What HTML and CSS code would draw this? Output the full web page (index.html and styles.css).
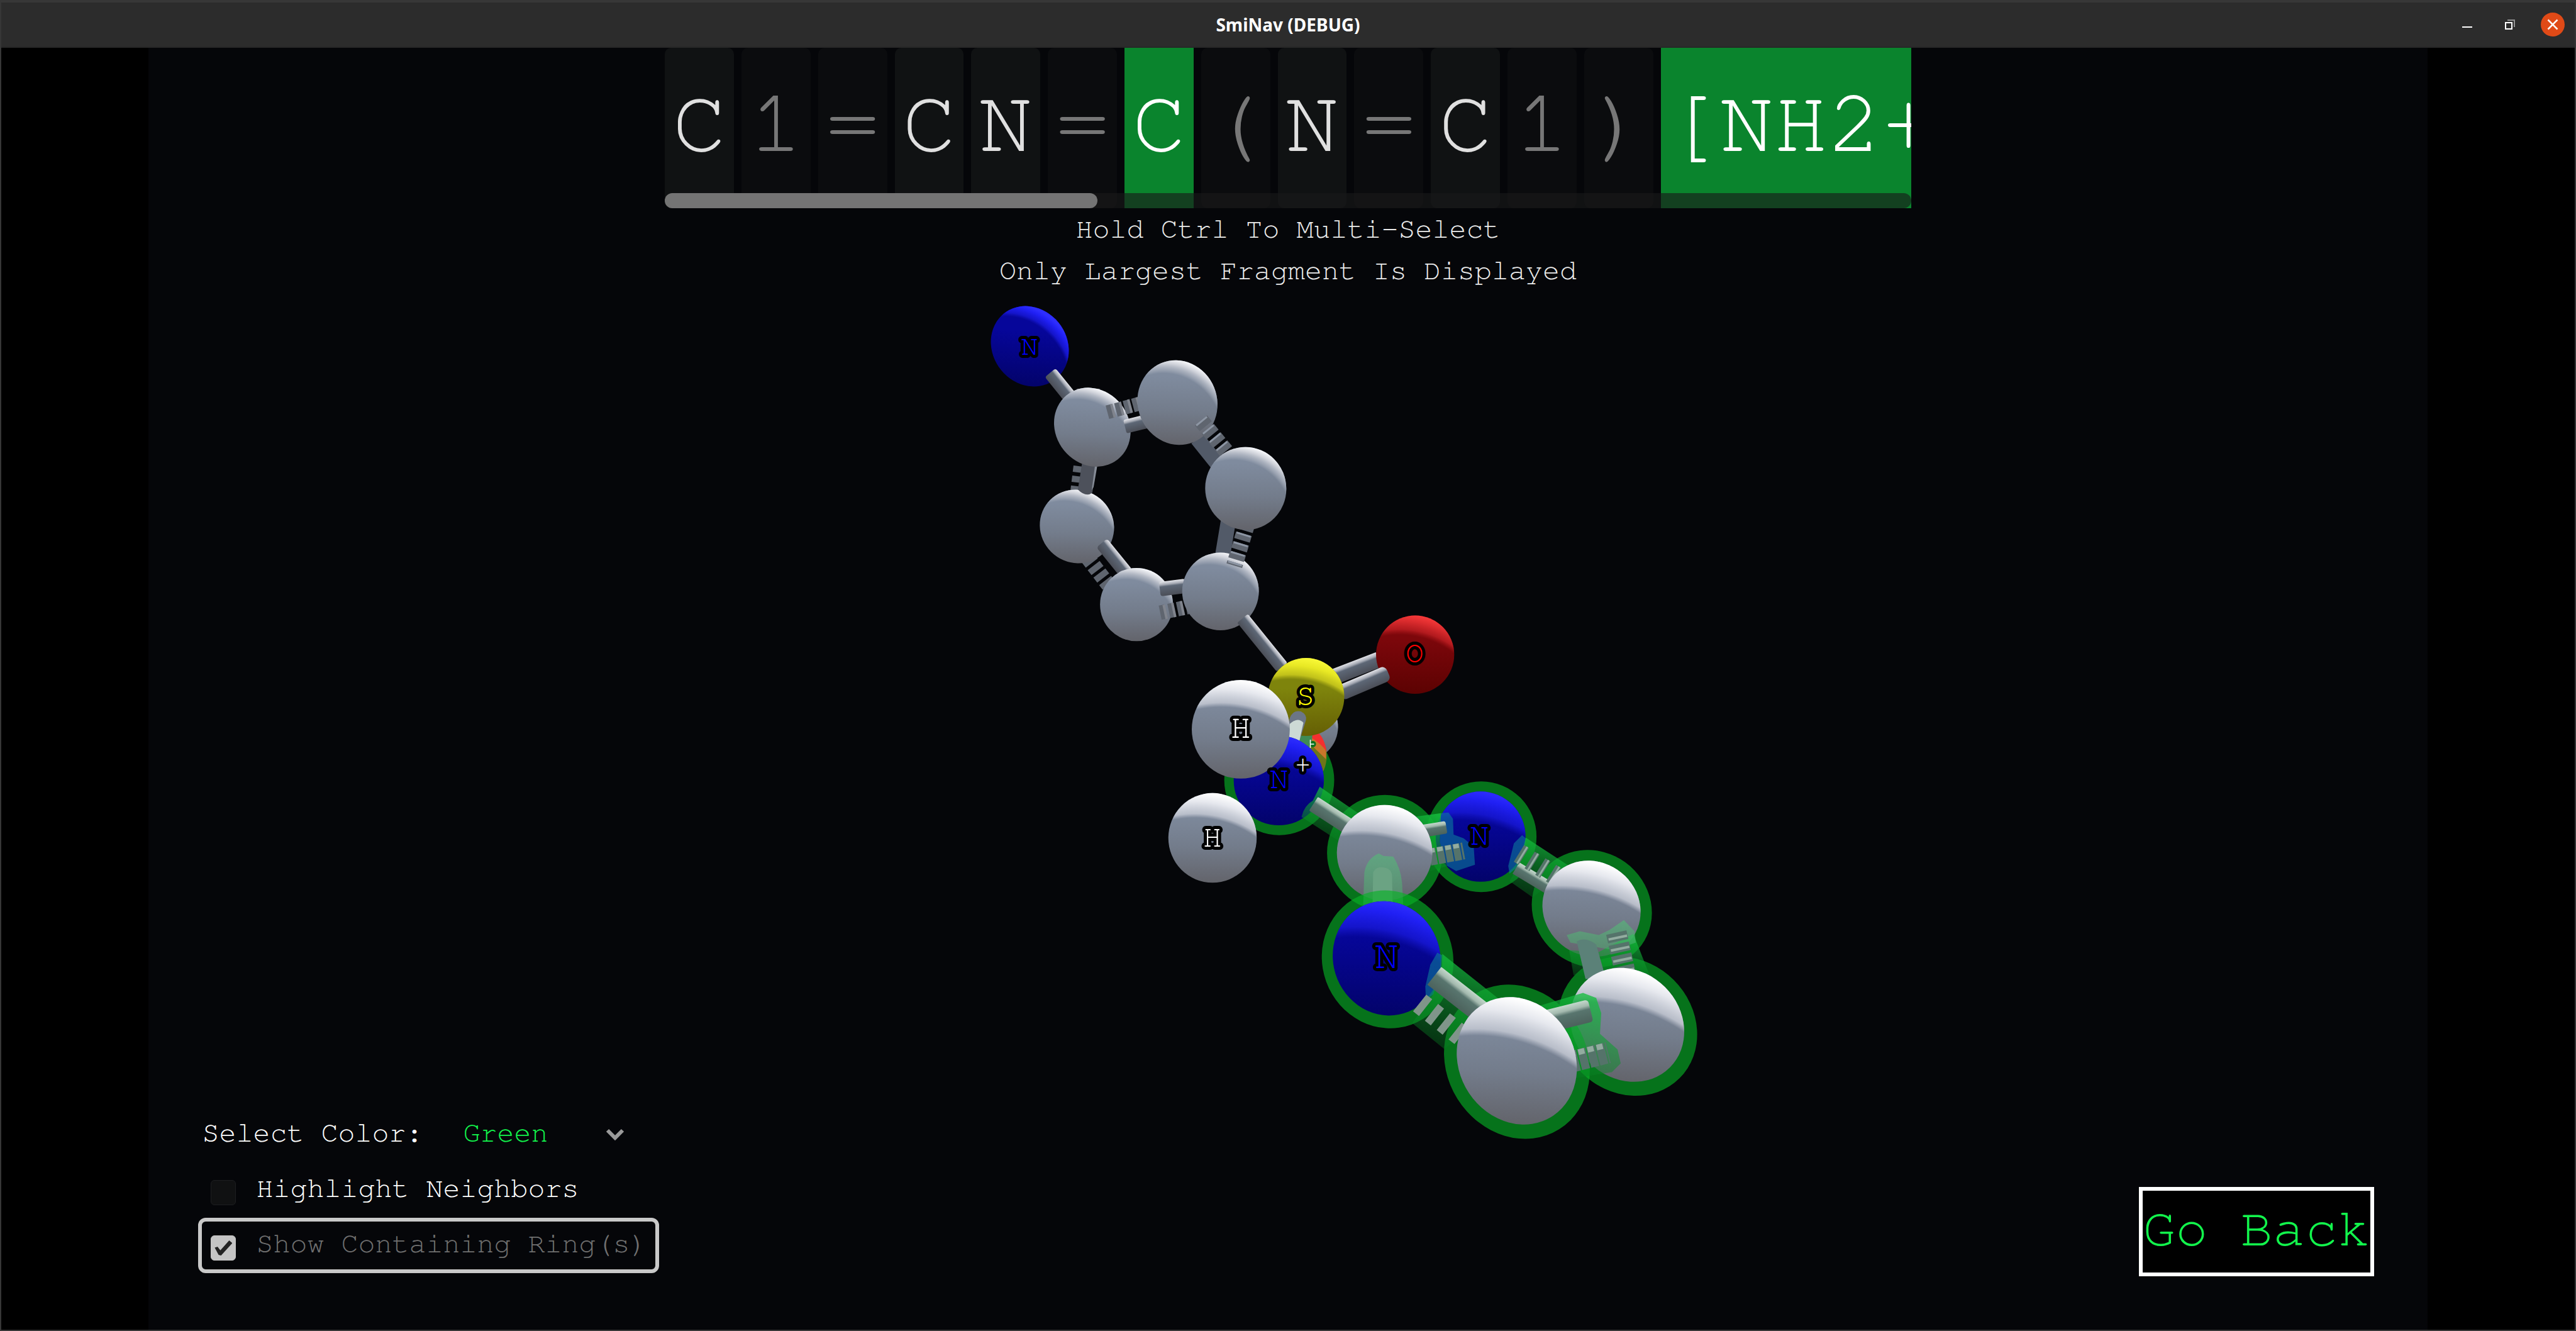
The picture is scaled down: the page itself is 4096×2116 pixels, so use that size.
FILE: index.html
```html
<!DOCTYPE html>
<html lang="en">
<head>
<meta charset="utf-8">
<title>SmiNav (DEBUG)</title>
<link rel="stylesheet" href="styles.css">
</head>
<body>
<header class="titlebar">
  <h1 class="title">SmiNav (DEBUG)</h1>
  <div class="window-buttons">
    <button class="win-btn" aria-label="Minimize"><svg viewBox="0 0 38 38"><path d="M11 23h16" stroke="#fff" stroke-width="2"/></svg></button>
    <button class="win-btn" aria-label="Restore"><svg viewBox="0 0 38 38"><path d="M15 12h11v11" fill="none" stroke="#919191" stroke-width="2"/><rect x="12" y="16" width="10" height="10" fill="none" stroke="#fff" stroke-width="2"/></svg></button>
    <button class="win-btn" aria-label="Close"><svg viewBox="0 0 38 38"><circle cx="19" cy="19" r="19" fill="#e04a17"/><path d="M11.500 11.500l15 15m0-15l-15 15" stroke="#fff" stroke-width="2.500"/></svg></button>
  </div>
</header>

<main class="stage">
  <svg class="molecule" viewBox="237 76 3626 2040" role="img" aria-label="Molecule">
    <defs>
      <radialGradient id="stops-white"><stop offset=".8" stop-color="#c4c8d4" stop-opacity="0"/><stop offset=".83" stop-color="#c8ccd6" stop-opacity=".8"/><stop offset=".92" stop-color="#e6e8ee"/><stop offset=".99" stop-color="#fff"/></radialGradient>
      <radialGradient id="stops-grey"><stop offset=".8" stop-color="#a8afbc" stop-opacity="0"/><stop offset=".85" stop-color="#a8afbc" stop-opacity=".7"/><stop offset=".93" stop-color="#cdd0d8"/><stop offset="1" stop-color="#f4f5f8"/></radialGradient>
      <radialGradient id="stops-blue"><stop offset=".8" stop-color="#1414c0" stop-opacity="0"/><stop offset=".85" stop-color="#1616d0" stop-opacity=".9"/><stop offset=".94" stop-color="#2020f4"/><stop offset="1" stop-color="#2e2eff"/></radialGradient>
      <radialGradient id="stops-yellow"><stop offset=".8" stop-color="#b8b818" stop-opacity="0"/><stop offset=".84" stop-color="#c8c81c" stop-opacity=".9"/><stop offset=".92" stop-color="#e8e824"/><stop offset="1" stop-color="#fafa38"/></radialGradient>
      <radialGradient id="stops-red"><stop offset=".8" stop-color="#a81418" stop-opacity="0"/><stop offset=".85" stop-color="#b81c20" stop-opacity=".9"/><stop offset=".93" stop-color="#dc2c2e"/><stop offset="1" stop-color="#fc3c3c"/></radialGradient>
      <radialGradient id="white-near" href="#stops-white" gradientUnits="userSpaceOnUse" cx="-50" cy="242" r="348"/>
      <radialGradient id="white-mid" href="#stops-white" gradientUnits="userSpaceOnUse" cx="-40" cy="195" r="300"/>
      <radialGradient id="grey-far" href="#stops-grey" gradientUnits="userSpaceOnUse" cx="-30" cy="74" r="178"/>
      <radialGradient id="blue-near" href="#stops-blue" gradientUnits="userSpaceOnUse" cx="-50" cy="242" r="348"/>
      <radialGradient id="blue-far" href="#stops-blue" gradientUnits="userSpaceOnUse" cx="-50" cy="74" r="182"/>
      <radialGradient id="yellow-mid" href="#stops-yellow" gradientUnits="userSpaceOnUse" cx="-40" cy="195" r="300"/>
      <radialGradient id="red-mid" href="#stops-red" gradientUnits="userSpaceOnUse" cx="-40" cy="175" r="282"/>
      <linearGradient id="base-carbon" x2="0" y2="1"><stop offset=".2" stop-color="#7f8b9e"/><stop offset=".6" stop-color="#737c8b"/><stop offset="1" stop-color="#63646b"/></linearGradient>
      <linearGradient id="base-blue" x2="0" y2="1"><stop offset=".3" stop-color="#06069a"/><stop offset="1" stop-color="#03036a"/></linearGradient>
      <linearGradient id="base-yellow" x2="0" y2="1"><stop offset=".4" stop-color="#7e840c"/><stop offset="1" stop-color="#655f04"/></linearGradient>
      <linearGradient id="base-red" x2="0" y2="1"><stop offset=".3" stop-color="#7c070b"/><stop offset="1" stop-color="#5c0202"/></linearGradient>
      <linearGradient id="rod" x2="0" y2="1"><stop offset="0" stop-color="#e4e5ea"/><stop offset=".22" stop-color="#a9adb7"/><stop offset=".36" stop-color="#5d6776"/><stop offset="1" stop-color="#4b4e57"/></linearGradient>
      <linearGradient id="rod-green" x2="0" y2="1"><stop offset="0" stop-color="#c4d8cc"/><stop offset=".25" stop-color="#a3b9ae"/><stop offset=".42" stop-color="#58756e"/><stop offset="1" stop-color="#4c625c"/></linearGradient>
      <linearGradient id="tube" gradientUnits="objectBoundingBox" x1=".6" y1="0" x2=".3" y2="1"><stop offset="0" stop-color="#16c040" stop-opacity=".8"/><stop offset=".45" stop-color="#0ea030" stop-opacity=".6"/><stop offset="1" stop-color="#067820" stop-opacity=".38"/></linearGradient>
      <linearGradient id="veil" x2="0" y2="1"><stop offset="0" stop-color="#55b878" stop-opacity=".65"/><stop offset="1" stop-color="#4fae72" stop-opacity=".5"/></linearGradient>
      <g id="carbon-far"><circle r="100" fill="url(#base-carbon)"/><circle r="100" fill="url(#grey-far)"/></g>
      <g id="carbon-near"><circle r="100" fill="url(#base-carbon)"/><circle r="100" fill="url(#white-near)"/></g>
      <g id="hydrogen"><circle r="100" fill="url(#base-carbon)"/><circle r="100" fill="url(#white-mid)"/></g>
      <g id="nitrogen-far"><circle r="100" fill="url(#base-blue)"/><circle r="100" fill="url(#blue-far)"/></g>
      <g id="nitrogen-near"><circle r="100" fill="url(#base-blue)"/><circle r="100" fill="url(#blue-near)"/></g>
      <g id="sulfur"><circle r="100" fill="url(#base-yellow)"/><circle r="100" fill="url(#yellow-mid)"/></g>
      <g id="oxygen"><circle r="100" fill="url(#base-red)"/><circle r="100" fill="url(#red-mid)"/></g>
    </defs>

    <!-- upper ring -->
    <path class="disc" stroke-width="20" stroke-dasharray="10 6" d="M1719 742L1713 790"/>
    <path class="disc" stroke-width="24" stroke-dasharray="10 5" d="M1732 888L1765 931"/>
    <path class="disc-shade" stroke-width="24" d="M1906 698L1938 738"/>
    <path class="disc-shade" stroke-width="24" d="M1956 826L1946 886"/>
    <use href="#nitrogen-far" transform="translate(1639.500 551) rotate(53) scale(.665 .593) rotate(-53)"/>
    <rect fill="url(#rod)" y="-11" width="60" height="22" rx="4" transform="translate(1672 593) rotate(51)"/>
    <use href="#carbon-far" transform="translate(1714.500 837.700) rotate(38) scale(.6 .576) rotate(-38)"/>
    <path d="M1723 735L1747 735L1739 784Q1729 792 1716 779Z" fill="#4d515b"/><path d="M1744 735L1748 735L1741 775L1738 780Z" fill="#858b96"/>
    <rect fill="url(#rod)" y="-11" width="64" height="22" rx="5" transform="translate(1754 864) rotate(51)"/>
    <use href="#carbon-far" transform="translate(1739 679.700) rotate(53) scale(.653 .583) rotate(-53)"/>
    <path class="disc" stroke-width="22" stroke-dasharray="9 5" d="M1763 656L1815 642"/><path class="disc-edge" stroke-width="22" stroke-dasharray="4 10" d="M1770 654L1815 642"/>
    <rect fill="url(#rod)" y="-11" width="40" height="22" rx="3" transform="translate(1791 679) rotate(-14)"/>
    <use href="#carbon-far" transform="translate(1874.500 640.500) rotate(69) scale(.679 .631) rotate(-69)"/>
    <path class="disc" stroke-width="25" stroke-dasharray="12 5" d="M1912 669L1960 728"/><path class="disc-lit" stroke-width="22" stroke-dasharray="3 14" d="M1912 669L1960 728"/>
    <use href="#carbon-far" transform="translate(1809.300 962) scale(.58 .583)"/>
    <rect fill="url(#rod)" y="-12" width="42" height="23" rx="4" transform="translate(1845 926) rotate(-7) translate(0 12)"/>
    <path class="disc" stroke-width="23" stroke-dasharray="9 5" d="M1847 975L1895 965"/><path class="disc-edge" stroke-width="23" stroke-dasharray="4 10" d="M1853 974L1895 965"/>
    <use href="#carbon-far" transform="translate(1943 941) scale(.61 .618)"/>
    <path class="disc" stroke-width="26" stroke-dasharray="11 5" d="M1985 834L1965 900"/><path class="disc-lit" stroke-width="23" stroke-dasharray="3 13" d="M1985 834L1965 900"/>
    <use href="#carbon-far" transform="translate(1983.200 777.200) rotate(78) scale(.66 .645) rotate(-78)"/>

    <!-- sulfonyl group -->
    <rect fill="url(#rod)" y="-11" width="100" height="22" rx="3" transform="translate(1978 984) rotate(51)"/>
    <rect fill="url(#rod)" y="-13" width="78" height="25" transform="translate(2122 1078) rotate(-21)"/>
    <use href="#oxygen" transform="translate(2252.800 1041.700) scale(.622)"/>
    <rect fill="url(#rod)" y="-11" width="84" height="25" rx="8" transform="translate(2132 1102) rotate(-23)"/>
    <use href="#carbon-far" transform="translate(2077 1157) scale(.53)"/>
    <ellipse class="halo" cx="2036.500" cy="1241.500" rx="87.500" ry="87.500"/>
    <circle cx="2055" cy="1203" r="57" fill="#6d7519"/>
    <path d="M2080 1166Q2104 1174 2111 1196L2111 1208L2084 1182Z" fill="#c8762a"/>
    <path d="M2088 1166L2100 1167Q2109 1177 2112 1196Q2104 1184 2088 1174Z" fill="#f4302f"/>
    <path d="M2068 1160L2090 1164L2087 1190L2066 1186Z" fill="#3f8a55"/>
    <use href="#sulfur" transform="translate(2079.200 1109) scale(.608 .62)"/>
    <path d="M2053 1143Q2058 1129 2071 1132Q2081 1137 2079 1146L2069 1178L2050 1174Z" fill="#6c7686"/>
    <path d="M2053 1152Q2066 1140 2075 1150L2068 1182L2050 1176Z" fill="#cddad5"/>
    <circle cx="2090" cy="1184" r="5" fill="#07731c"/>
    <path d="M2086 1177V1190M2086 1184H2092" stroke="#fff" stroke-width="1.500"/>
    <use href="#nitrogen-near" transform="translate(2035.800 1242) scale(.718 .713)"/>
    <use href="#hydrogen" transform="translate(1930.300 1333.300) scale(.703 .713)"/>
    <use href="#hydrogen" transform="translate(1975.300 1160.500) scale(.78 .785)"/>

    <!-- selected ring -->
    <ellipse class="halo" cx="2358" cy="1331.500" rx="88" ry="88"/>
    <ellipse class="halo" cx="2204.600" cy="1357" rx="92" ry="92"/>
    <use href="#nitrogen-near" transform="translate(2357 1331.300) scale(.715 .718)"/>
    <path fill="url(#tube)" d="M2101 1252L2165 1296L2134 1340L2072 1300Q2076 1282 2090 1274Z"/>
    <rect fill="url(#rod-green)" y="-13" width="66" height="26" rx="2" transform="translate(2091 1279) rotate(33)"/>
    <path class="tint" d="M2294 1294L2306 1293L2313 1303L2314 1328L2330 1334L2346 1347L2348 1376L2318 1386L2304 1378L2292 1340Z"/>
    <path fill="url(#tube)" d="M2250 1300L2294 1294L2292 1340L2304 1378L2270 1388Z"/>
    <rect fill="url(#rod-green)" y="-10" width="42" height="20" rx="3" transform="translate(2261 1323) rotate(-9)"/>
    <path class="disc-green" stroke-width="27" stroke-dasharray="11 2" d="M2276 1364L2330 1354"/><path class="disc-green-lit" stroke-width="7" stroke-dasharray="9 4" d="M2275 1354L2326 1345"/>
    <ellipse class="halo" rx="98" ry="91" transform="translate(2534 1446) rotate(36)"/>
    <path class="tint" d="M2423 1329L2429 1334L2428 1350L2418 1378L2403 1390L2401 1378L2410 1342Z"/>
    <path fill="url(#tube)" d="M2429 1333L2501 1380L2440 1428L2403 1402L2418 1376Z"/>
    <rect fill="url(#rod-green)" y="-9" width="66" height="21" transform="translate(2414 1380) rotate(31)"/>
    <path class="disc-green" stroke-width="31" stroke-dasharray="9 11" d="M2418 1358L2488 1401"/><path class="disc-green-lit" stroke-width="31" stroke-dasharray="3 17" d="M2422 1360L2488 1401"/>
    <use href="#carbon-near" transform="translate(2533.500 1446) rotate(36) scale(.8 .745) rotate(-36)"/>
    <ellipse class="halo" rx="117" ry="104" transform="translate(2591 1633) rotate(45)"/>
    <path fill="url(#tube)" d="M2498 1512L2545 1515L2600 1486L2626 1552L2560 1556L2505 1552Z"/>
    <path fill="url(#veil)" d="M2562 1480L2585 1464L2602 1482L2604 1500L2570 1512L2500 1500L2494 1488L2515 1482L2545 1488Z"/>
    <path d="M2510 1498Q2524 1490 2541 1503L2556 1556L2524 1558Z" fill="#5b8178"/>
    <path class="disc-green" stroke-width="33" stroke-dasharray="14 4" d="M2573 1484L2588 1552"/><path class="disc-green-lit" stroke-width="30" stroke-dasharray="4 14" d="M2575 1490L2588 1552"/>
    <use href="#carbon-near" transform="translate(2590.400 1630.800) rotate(45) scale(.96 .85) rotate(-45)"/>
    <use href="#carbon-near" transform="translate(2204.200 1357) scale(.76)"/>
    <path fill="url(#veil)" d="M2170 1442L2172 1388Q2176 1366 2195 1358L2202 1362L2218 1363Q2230 1382 2232 1405L2234 1442Z"/>
    <path d="M2185 1442L2186 1388Q2190 1380 2198 1380Q2214 1380 2216 1392L2217 1442Z" fill="#6ba383"/>
    <ellipse class="halo" rx="110.500" ry="104" transform="translate(2209 1526.600) rotate(70)"/>
    <ellipse class="halo" rx="126.800" ry="111.600" transform="translate(2414.800 1689.500) rotate(58)"/>
    <use href="#nitrogen-near" transform="translate(2207.500 1525) rotate(70) scale(.917 .851) rotate(-70)"/>
    <path class="tint" d="M2288 1516L2296 1520L2294 1545L2282 1582L2270 1592L2269 1570L2277 1535Z"/>
    <path fill="url(#tube)" d="M2296 1518L2384 1588L2340 1640L2299 1669L2248 1628L2280 1584L2295 1545Z"/>
    <rect fill="url(#rod-green)" y="-17" width="96" height="36" transform="translate(2284 1552) rotate(38)"/>
    <path class="disc-pale" stroke-width="34" stroke-dasharray="12 12" d="M2260 1596L2336 1656"/>
    <path fill="url(#tube)" d="M2452 1600L2520 1580L2541 1588L2549 1612L2547 1645L2575 1670L2580 1692L2566 1706L2505 1716Z"/>
    <rect fill="url(#rod-green)" y="-17" width="74" height="36" rx="5" transform="translate(2460 1625) rotate(-14)"/>
    <path class="disc-green" stroke-width="34" stroke-dasharray="13 2" d="M2500 1690L2560 1675"/><path class="disc-green-lit" stroke-width="9" stroke-dasharray="10 5" d="M2498 1678L2554 1664"/>
    <use href="#carbon-near" transform="translate(2414.600 1688) rotate(58) scale(1.048 .918) rotate(-58)"/>

    <!-- element symbols -->
    <g class="symbols">
      <text class="atom" x="1639" y="564" font-size="45" fill="#00f">N</text>
      <text class="atom" x="2252" y="1054" font-size="48" fill="#f00">O</text>
      <text class="atom" x="2078" y="1122" font-size="48" fill="#ff0">S</text>
      <text class="atom" x="1975" y="1174" font-size="54" fill="#fff">H</text>
      <text class="atom" x="1930" y="1347" font-size="50" fill="#fff">H</text>
      <text class="atom" x="2036" y="1254" font-size="50" fill="#00f">N</text>
      <text class="atom" x="2074" y="1229" font-size="42" fill="#fff">+</text>
      <text class="atom" x="2355" y="1344" font-size="50" fill="#00f">N</text>
      <text class="atom" x="2207" y="1540" font-size="64" fill="#00f">N</text>
    </g>
  </svg>

  <section class="top">
    <div class="smiles">
      <div class="tokens">
        <button class="token">C</button><button class="token" disabled>1</button><button class="token" disabled>=</button><button class="token">C</button><button class="token">N</button><button class="token" disabled>=</button><button class="token selected">C</button><button class="token" disabled>(</button><button class="token">N</button><button class="token" disabled>=</button><button class="token">C</button><button class="token" disabled>1</button><button class="token" disabled>)</button><button class="token selected long">[NH2+]</button>
      </div>
      <div class="scrollbar"><div class="thumb"></div></div>
    </div>
    <p class="hint">Hold Ctrl To Multi-Select</p>
    <p class="hint">Only Largest Fragment Is Displayed</p>
  </section>

  <footer class="bottom">
    <form class="options">
      <div class="option color-row">
        <label for="color">Select Color:</label>
        <div class="picker">
          <select id="color"><option>Green</option></select>
          <svg class="chevron" viewBox="0 0 32 22"><path d="M4 4l12 12l12-12" fill="none" stroke="#9a9a9a" stroke-width="6"/></svg>
        </div>
      </div>
      <div class="option"><input type="checkbox" id="neighbors"><label for="neighbors">Highlight Neighbors</label></div>
      <div class="option focused"><input type="checkbox" id="rings" checked><label for="rings">Show Containing Ring(s)</label></div>
    </form>
    <button class="back">Go Back</button>
  </footer>
</main>
</body>
</html>
```
FILE: styles.css
```css
* { box-sizing: border-box; }

body {
  margin: 0;
  min-height: 100vh;
  background: #000;
  border: 2px solid #373737;
  border-top: 0;
  color: #ececec;
  font-family: "Nimbus Mono PS", "FreeMono", "Liberation Mono", monospace;
  font-size: 45px;
}

button, select { font: inherit; color: inherit; border: 0; margin: 0; padding: 0; background: none; }

.titlebar {
  display: grid;
  grid-template-columns: 1fr auto 1fr;
  align-items: center;
  height: 76px;
  background: #2c2c2c;
  border-top: 4px solid #373737;
  border-bottom: 2px solid #272727;
}
.title {
  grid-column: 2;
  margin: 0;
  font: bold 28px/40px "Noto Sans", sans-serif;
  color: #fff;
}
.window-buttons { display: flex; justify-content: flex-end; gap: 30px; padding-right: 16px; }
.win-btn { width: 38px; height: 38px; }
.win-btn svg { display: block; }

.stage {
  position: relative;
  display: flex;
  flex-direction: column;
  justify-content: space-between;
  height: calc(100vh - 78px);
  aspect-ratio: 16 / 9;
  margin: 0 auto;
  background: #050609;
}

.molecule { position: absolute; inset: 0; width: 100%; height: 100%; }
.disc, .disc-edge, .disc-lit, .disc-shade, .disc-green, .disc-green-lit, .disc-pale { fill: none; }
.disc { stroke: #5f656f; }
.disc-edge { stroke: #80848d; }
.disc-lit { stroke: #8d96a4; }
.disc-shade { stroke: #525a68; }
.disc-green { stroke: #55736a; }
.disc-green-lit { stroke: #93aca0; }
.disc-pale { stroke: #80958a; }
.tint { fill: #0c7c9c; fill-opacity: .6; }
.halo { fill: #08b026; fill-opacity: .64; }
.atom {
  text-anchor: middle;
  stroke: #000;
  stroke-width: 10px;
  stroke-linejoin: round;
  paint-order: stroke;
}

.top { position: relative; text-align: center; }
.smiles {
  position: relative;
  width: 54.7%;
  height: 255px;
  margin: 0 auto;
  overflow: hidden;
}
.tokens { display: flex; gap: 12px; height: 100%; }
.token {
  flex: none;
  padding: 0 12px 12px;
  border-radius: 10px;
  background: #101213;
  color: #e0e0e0;
  font-size: 143px;
}
.token:disabled { background: #0b0c0e; color: #777; }
.token.selected { border-radius: 0; background: #0a842d; color: #fff; }
.token.long { padding: 0 8px 12px; }
.scrollbar {
  position: absolute;
  inset: auto 0 0;
  height: 24px;
  border-radius: 12px;
  background: rgba(26, 26, 26, .63);
}
.thumb { width: 34.7%; height: 100%; border-radius: 12px; background: #747474; }
.hint { margin: 0; padding-top: 2px; line-height: 64px; }

.bottom {
  position: relative;
  display: flex;
  justify-content: space-between;
  align-items: flex-end;
  padding: 0 85px 85px 79px;
}
.options { display: flex; flex-direction: column; align-items: flex-start; margin-bottom: 5px; color: #fff; }
.option {
  display: flex;
  align-items: center;
  gap: 32px;
  height: 88px;
  padding: 0 14px;
  border: 6px solid transparent;
  border-radius: 12px;
}
.option label, .picker select { padding-bottom: 6px; }
.color-row { gap: 64px; padding-left: 0; }
.focused { border-color: #c9c9c9; color: #707070; }
.picker { display: grid; align-items: center; width: 258px; color: #12f54c; }
.picker select { grid-area: 1 / 1; appearance: none; }
.chevron { grid-area: 1 / 1; justify-self: end; width: 32px; height: 22px; pointer-events: none; }
.option input {
  appearance: none;
  display: grid;
  place-items: center;
  width: 40px;
  height: 40px;
  margin: 8px 0 0;
  border: 1px solid #1d1e20;
  border-radius: 6px;
  background: #101112;
}
.option input:checked { background: #c4c4c4; border-color: #c4c4c4; }
.option input:checked::after {
  content: "";
  width: 28px;
  height: 24px;
  background: #222;
  clip-path: polygon(0 48%, 16% 42%, 32% 66%, 82% 0, 100% 18%, 36% 100%, 22% 96%);
}
.back {
  border: 6px solid #fff;
  height: 142px;
  padding-bottom: 8px;
  background: #000;
  color: #12f54c;
  font-size: 86px;
}
```
